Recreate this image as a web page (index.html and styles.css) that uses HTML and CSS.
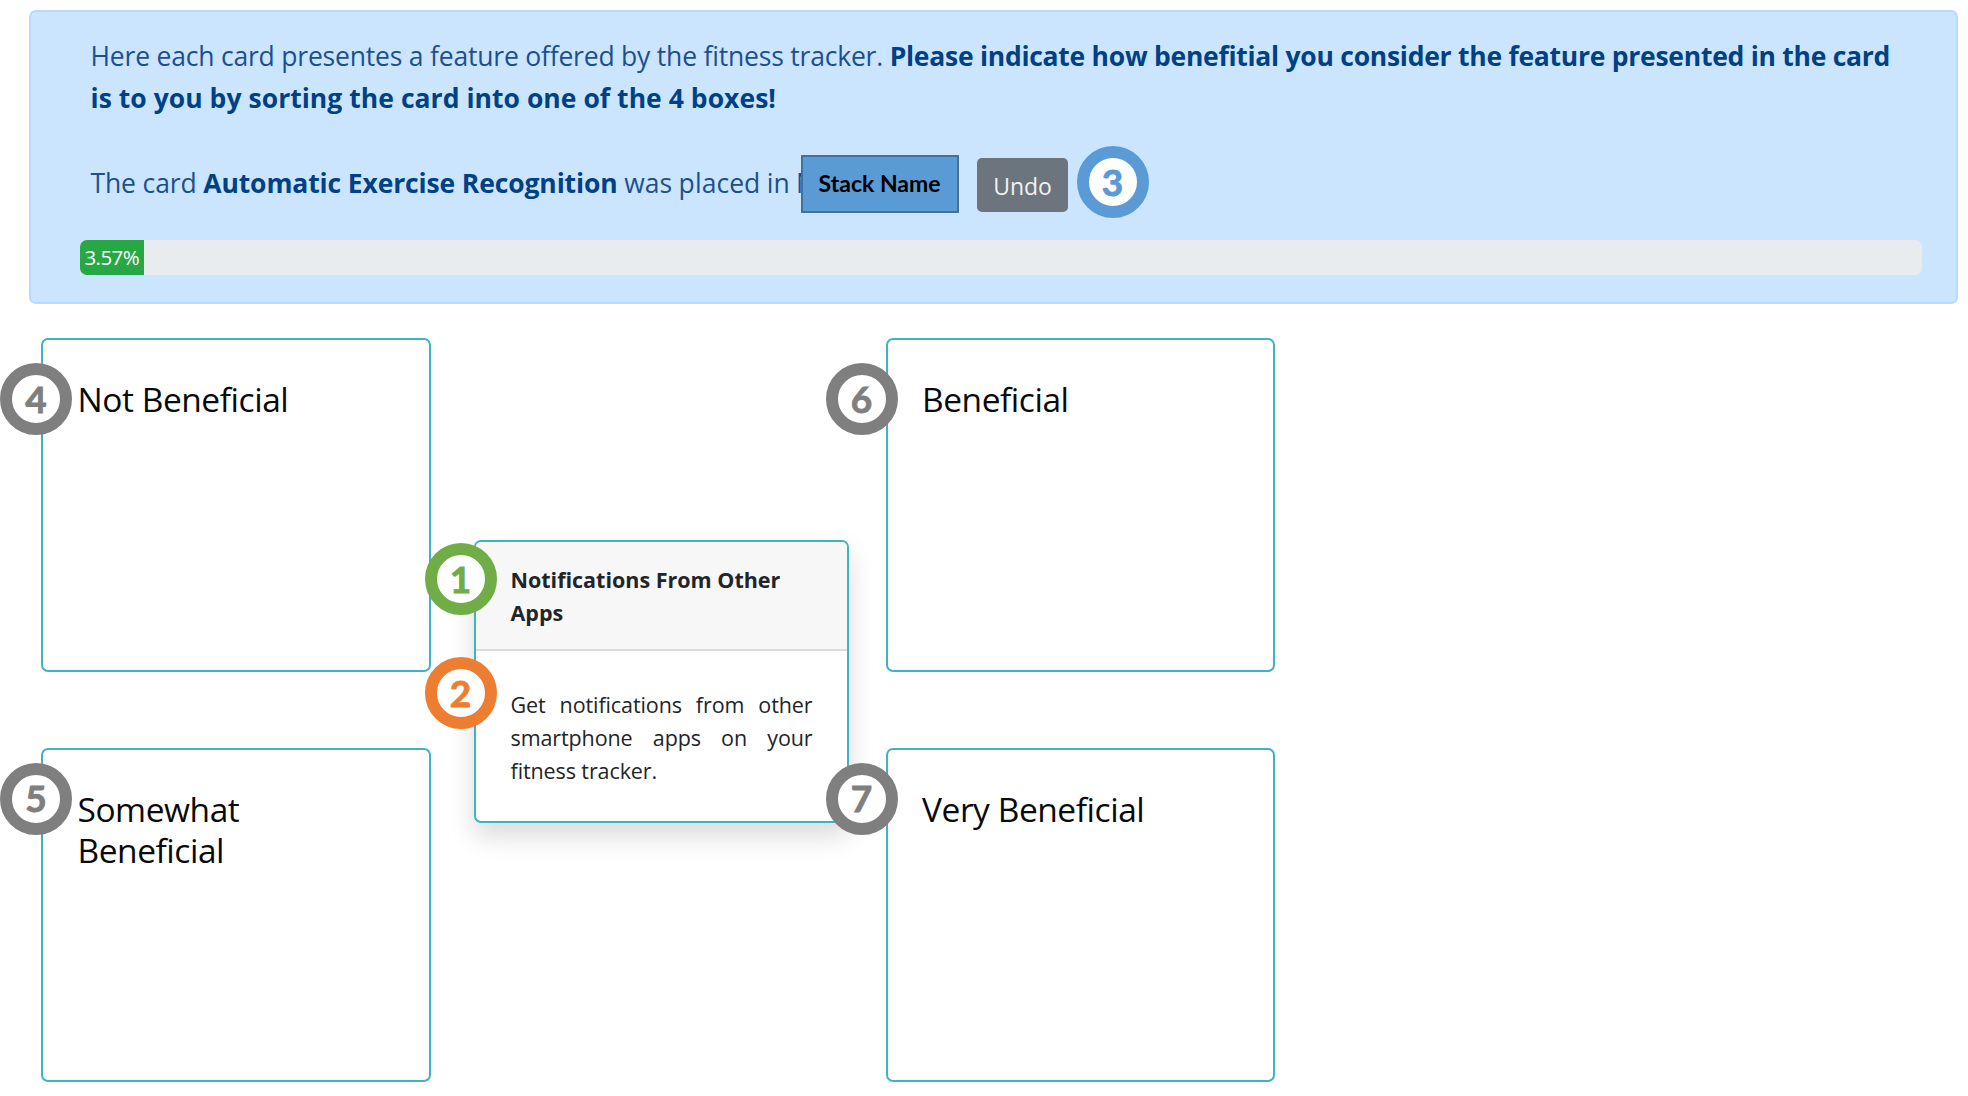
FILE: index.html
```
<!DOCTYPE html>
<html lang="en">
<head>
<meta charset="utf-8">
<title>Card sorting</title>
<link rel="stylesheet" href="styles.css">
</head>
<body>
<main class="page">
  <section class="alert">
    <p class="intro">Here each card presentes a feature offered by the fitness tracker. <b>Please indicate how benefitial you consider the feature presented in the card</b><br><b class="intro-end">is to you by sorting the card into one of the 4 boxes!</b></p>
    <div class="status">
      <p class="status-text">The card <b>Automatic Exercise Recognition</b> <span class="placed">was placed in N</span></p>
      <span class="stack-name">Stack Name</span>
      <button class="undo" type="button">Undo</button>
      <span class="marker marker-blue">3</span>
    </div>
    <div class="progress"><div class="progress-bar" style="width: 3.5%">3.57%</div></div>
  </section>

  <section class="board">
    <div class="box"><h2>Not Beneficial</h2><span class="marker pin pin-upper">4</span></div>
    <div class="box"><h2>Beneficial</h2><span class="marker pin pin-upper pin-right">6</span></div>
    <div class="box"><h2>Somewhat<br>Beneficial</h2><span class="marker pin pin-lower">5</span></div>
    <div class="box box-front"><h2>Very Beneficial</h2><span class="marker pin pin-lower pin-right">7</span></div>

    <article class="card">
      <header class="card-header">Notifications From Other Apps</header>
      <p class="card-body">Get notifications from other smartphone apps on your fitness tracker.</p>
      <span class="marker marker-green pin pin-title">1</span>
      <span class="marker marker-orange pin pin-body">2</span>
    </article>
  </section>
</main>
</body>
</html>
```
FILE: styles.css
```
* { box-sizing: border-box; }

body {
  margin: 0;
  background: #fff;
  color: #212529;
  font-family: "Open Sans", "Noto Sans", sans-serif;
  overflow: hidden;
}

p, h2 { margin: 0; }

.page {
  height: 1096px;
  padding: 10px 10.5px 0 29px;
}

/* instructions */
.alert {
  height: 294px;
  padding: 24px 34px 0 48.5px;
  border: 2px solid #b8daff;
  border-radius: 7px;
  background: #cce5ff;
  color: #1b4f8f;
  font-size: 26.5px;
  line-height: 41.5px;
}

.alert b { color: #004085; }

.intro {
  padding-left: 11px;
  letter-spacing: -0.2px;
  white-space: nowrap;
}

.intro b { letter-spacing: -0.26px; }
.intro .intro-end { letter-spacing: 0.04px; }

.status {
  display: flex;
  align-items: center;
  height: 72px;
  margin-top: 27px;
  padding-left: 11px;
}

.status-text {
  padding-top: 3px;
  letter-spacing: -0.13px;
  white-space: nowrap;
}

.placed { letter-spacing: 0.05px; word-spacing: -0.6px; }

.stack-name {
  display: flex;
  align-items: center;
  justify-content: center;
  position: relative;
  width: 158px;
  height: 58px;
  margin: 4px 0 0 -15.5px;
  padding-bottom: 2px;
  border: 2px solid #41719c;
  background: #5b9bd5;
  color: #000;
  font: 700 23px Lato, sans-serif;
}

.undo {
  width: 91px;
  height: 54px;
  margin: 6px 0 0 18.5px;
  padding: 2px 0 0;
  border: 0;
  border-radius: 5px;
  background: #6c757d;
  color: #f1f2f3;
  font: 400 23px "Open Sans", sans-serif;
}

.progress {
  height: 35px;
  margin-top: 21.5px;
  border-radius: 7px;
  background: #e9ecef;
  overflow: hidden;
}

.progress-bar {
  height: 100%;
  background: #28a745;
  color: #fff;
  font-size: 20.5px;
  line-height: 35px;
  letter-spacing: -0.6px;
  text-align: center;
}

/* numbered markers */
.marker {
  display: flex;
  align-items: center;
  justify-content: center;
  width: 72px;
  height: 72px;
  padding-bottom: 2px;
  border: 12px solid #7f7f7f;
  border-radius: 50%;
  background: #fff;
  color: #7f7f7f;
  font: 700 37px/1 Lato, sans-serif;
  -webkit-text-stroke: 0.9px currentColor;
}

.marker-blue { margin-left: 8.5px; border-color: #5b9bd5; color: #5b9bd5; }
.marker-green { border-color: #70ad47; color: #70ad47; }
.marker-orange { border-color: #ed7d31; color: #ed7d31; }

.pin { position: absolute; z-index: 3; left: -43px; }
.pin-upper { top: 23px; }
.pin-lower { top: 12.5px; }
.pin-right { left: -62px; }
.pin-title { left: -51.5px; top: 1.5px; }
.pin-body { left: -51.5px; top: 115.5px; }

/* sorting boxes */
.board {
  display: grid;
  grid-template-columns: 389.5px 389.5px;
  grid-template-rows: 334px 334px;
  gap: 76px 455px;
  position: relative;
  margin: 34.4px 0 0 12px;
}

.box {
  position: relative;
  padding: 38.2px 34.5px;
  border: 2px solid #40b2c5;
  border-radius: 7px;
}

.box-front { z-index: 2; }

.box h2 {
  color: #0a0a0a;
  font-size: 33.5px;
  font-weight: 400;
  line-height: 41.5px;
  letter-spacing: -0.45px;
}

/* the card being sorted */
.card {
  position: absolute;
  z-index: 1;
  left: 433px;
  top: 201.6px;
  width: 375px;
  height: 283px;
  border: 2px solid #40b2c5;
  border-radius: 7px;
  background: #fff;
  box-shadow: 0 13px 27px rgba(0, 0, 0, 0.15);
  font-size: 21.5px;
  line-height: 33px;
}

.card-header {
  height: 109px;
  padding: 21.5px 34.5px 0;
  border-bottom: 2px solid #dcdcdc;
  border-radius: 5px 5px 0 0;
  background: #f7f7f7;
  font-weight: 700;
}

.card-body {
  padding: 37.5px 34.5px 0;
  letter-spacing: -0.1px;
  text-align: justify;
}
```
